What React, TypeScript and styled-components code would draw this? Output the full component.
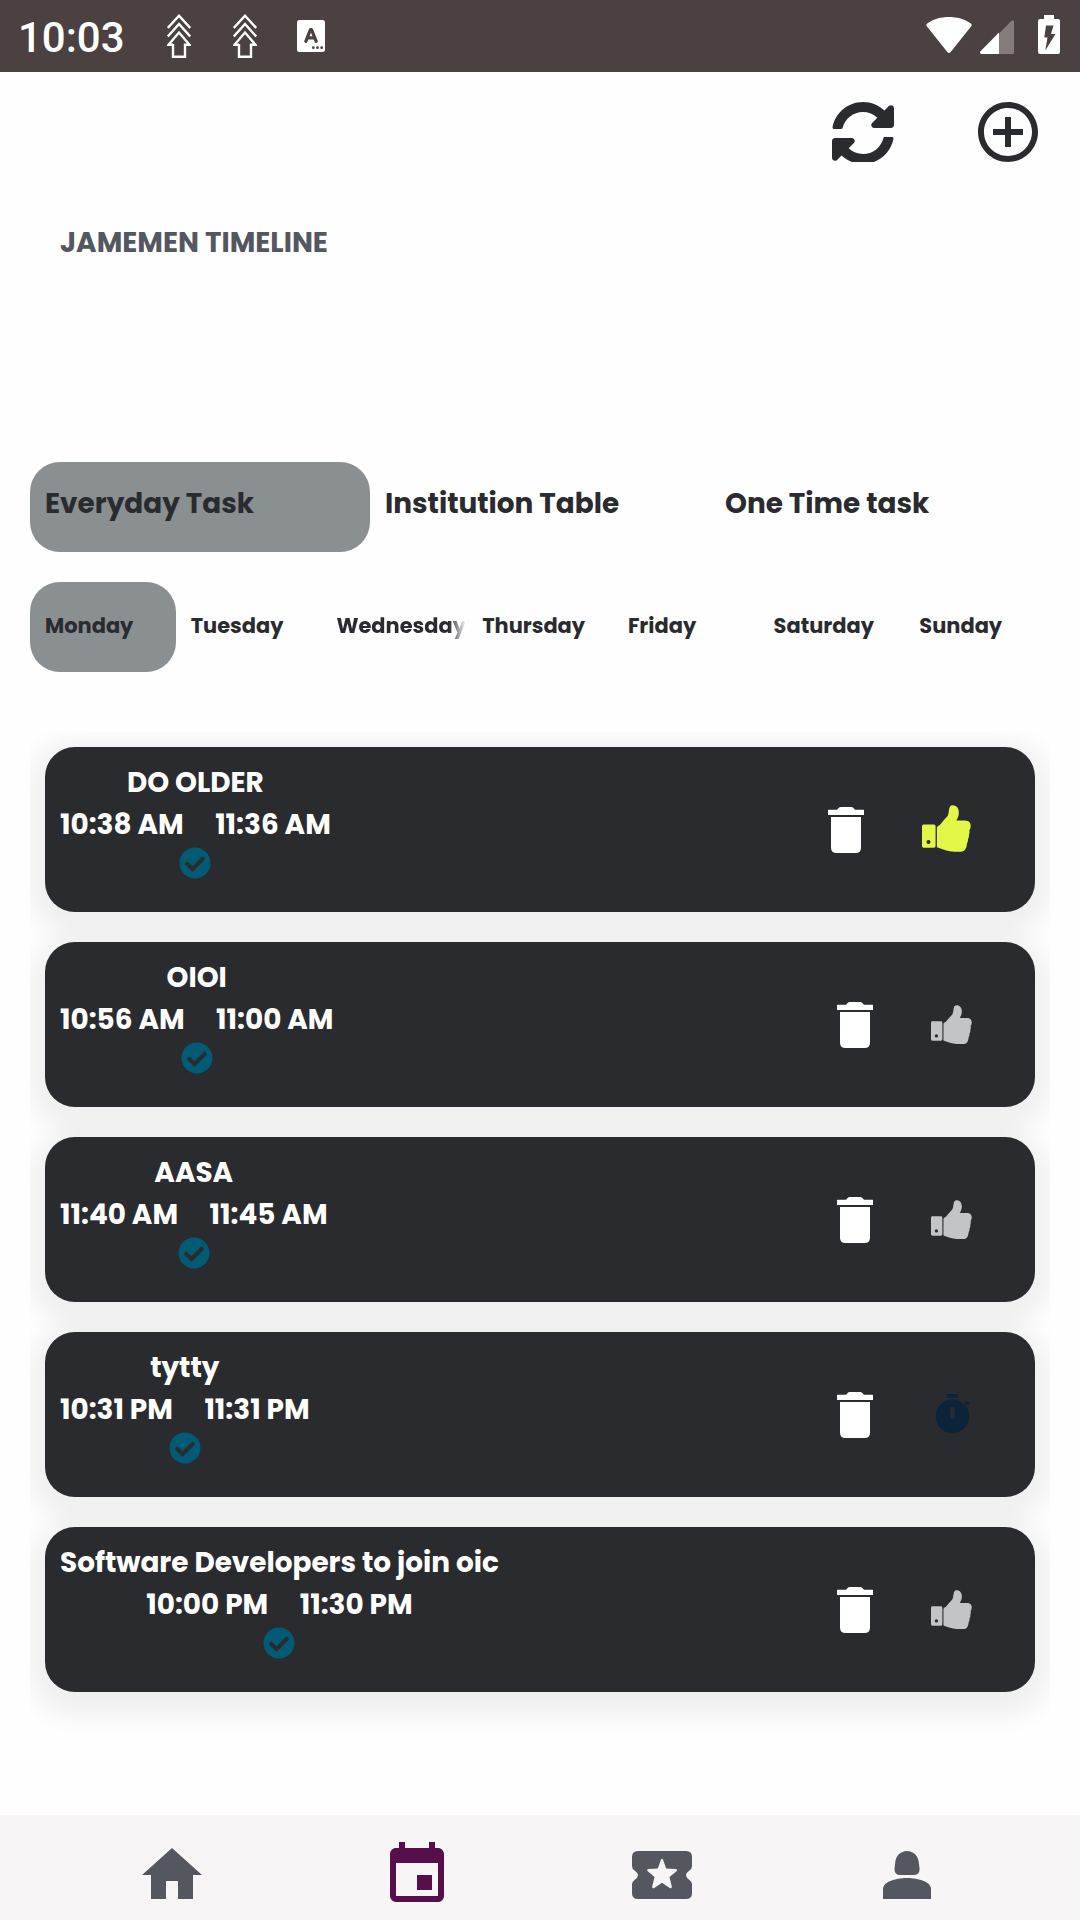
import React from "react";
import styled, { createGlobalStyle, css } from "styled-components";
import { FaCheckCircle, FaSyncAlt } from "react-icons/fa";

const ink = "#2a2b2f";
const slate = "#54575f";
const selected = "#8a8f92";

const GlobalStyle = createGlobalStyle`
  *, *::before, *::after { box-sizing: border-box; }
  body {
    margin: 0;
    background: #fefefe;
    font-family: Poppins, Inter, "Open Sans", sans-serif;
  }
  svg { display: block; flex: none; }
`;

const Screen = styled.main`
  width: 1080px;
  height: 1920px;
  display: flex;
  flex-direction: column;
  background: #fefefe;
  overflow: hidden;
`;

const StatusBar = styled.header`
  height: 72px;
  padding: 0 20px 0 18px;
  display: flex;
  justify-content: space-between;
  background: #4a4140;
  color: #fff;
`;

const StatusGroup = styled.div`
  display: flex;
  align-items: flex-start;
`;

const Clock = styled.span`
  width: 149px;
  padding-top: 13px;
  font: 500 42px/50px Roboto, sans-serif;
`;

const StatusIcon = styled.span<{ $top: number; $gap?: number }>`
  margin-top: ${(p) => p.$top}px;
  margin-right: ${(p) => p.$gap ?? 0}px;
`;

const Toolbar = styled.nav`
  height: 96px;
  padding: 24px 36px 0 0;
  display: flex;
  justify-content: flex-end;
  gap: 77px;
  color: ${ink};
`;

const ToolButton = styled.button<{ $top?: number; $height?: number }>`
  margin: ${(p) => p.$top ?? 0}px 0 0;
  height: ${(p) => p.$height ?? 72}px;
  padding: 0;
  border: 0;
  background: none;
  color: inherit;
  overflow: hidden;
  display: flex;
  align-items: flex-start;
`;

const Label = styled.span<{ $small?: boolean }>`
  display: inline-block;
  font-weight: 700;
  font-size: ${(p) => (p.$small ? 20.95 : 27.9)}px;
  line-height: ${(p) => (p.$small ? 34 : 42)}px;
  white-space: nowrap;
`;

const Heading = styled.h1`
  margin: 0;
  height: 294px;
  padding: 54px 0 0 60px;
  color: ${slate};
  font-size: inherit;
`;

const TabRow = styled.div`
  margin: 0 30px 30px;
  height: 90px;
  display: flex;
`;

const Tab = styled.div<{ $active?: boolean; $top: number }>`
  flex: 1 1 0;
  min-width: 0;
  padding: ${(p) => p.$top}px 0 0 15px;
  border-radius: 30px;
  color: ${ink};
  ${(p) => p.$active && css`background: ${selected};`}
`;

const FadedEdge = styled.div<{ $fade?: boolean }>`
  ${(p) =>
    p.$fade &&
    css`
      mask-image: linear-gradient(to right, #000 calc(100% - 18px), transparent calc(100% - 1px));
    `}
`;

const TaskList = styled.section`
  margin: 30px 30px 0;
  flex: 1;
  padding: 15px;
  display: flex;
  flex-direction: column;
  gap: 30px;
  overflow: hidden;
`;

const Card = styled.article`
  height: 165px;
  flex: none;
  padding: 15px 39px 0 15px;
  display: flex;
  justify-content: space-between;
  border-radius: 30px;
  background: ${ink};
  color: #fff;
  box-shadow: 0 9px 25px 15px rgba(0, 0, 0, 0.06);
`;

const Details = styled.div`
  display: flex;
  flex-direction: column;
  align-items: center;
`;

const Times = styled.div`
  display: flex;
  gap: 31.5px;
`;

const CheckMark = styled.span`
  margin-top: 1px;
  color: #025b74;
`;

const Actions = styled.div`
  height: 135px;
  display: flex;
  align-items: center;
  gap: 33px;
`;

const StatusSlot = styled.span<{ $state: State }>`
  width: ${(p) => (p.$state === "done" ? 99 : 90)}px;
  padding-left: ${(p) => (p.$state === "running" ? 2 : 0)}px;
  padding-bottom: ${(p) => (p.$state === "done" ? 2 : 0)}px;
  display: flex;
  justify-content: center;
`;

const BottomBar = styled.nav`
  height: 105px;
  flex: none;
  padding: 24px 51px 0 50px;
  display: flex;
  background: #f7f5f6;
`;

const NavItem = styled.a<{ $active?: boolean }>`
  flex: 1;
  display: flex;
  justify-content: center;
  color: ${(p) => (p.$active ? "#560f4b" : slate)};
`;

const ArrowStack = () => (
  <svg width="24" height="44" viewBox="0 0 24 44" fill="none" stroke="#fff" strokeWidth="2.4">
    <path d="M.8 14 12 1.800 23.200 14M.8 22.500 12 10 23.200 22.500" />
    <path d="M6 30.800H1.500L12 18.500 22.500 30.800H18V42.800H6V30Z" />
  </svg>
);

const KeyboardBadge = () => (
  <svg width="28" height="32" viewBox="0 0 28 32">
    <rect width="28" height="32" rx="2.500" fill="#fff" />
    <path d="M8.800 21.300 13.500 9.500h1L19.200 21.300M10.500 17.800h7" fill="none" stroke="#4a4140" strokeWidth="3.200" strokeLinejoin="round" strokeLinecap="round" />
    <g fill="#4a4140">
      <circle cx="16.300" cy="27.700" r="1.400" />
      <circle cx="20.500" cy="27.700" r="1.400" />
      <circle cx="24.700" cy="27.700" r="1.400" />
    </g>
  </svg>
);

const Wifi = () => (
  <svg width="46" height="36" viewBox="0 0 46 36" fill="#fff">
    <path d="M.8 9.200Q-.4 7.600 1.200 6.500C7.500 2 15 0 23 0S38.500 2 44.800 6.500Q46.400 7.600 45.200 9.200L24.500 35.200Q23 36.600 21.500 35.200Z" />
  </svg>
);

const Signal = () => (
  <svg width="35" height="34" viewBox="0 0 35 34">
    <path d="M19 13.500 31.500.8Q34 -.8 34 1.500V32.500Q34 34 32.500 34H19Z" fill="#847d7c" />
    <path d="M19 12.500V34H1.500Q-.8 33.500.5 31.200Z" fill="#fff" />
  </svg>
);

const Battery = () => (
  <svg width="22" height="39" viewBox="0 0 22 39">
    <path d="M6 0H16V4H20Q22 4 22 6V37Q22 39 20 39H2Q0 39 0 37V6Q0 4 2 4H6Z" fill="#fff" />
    <path d="M8 10.500H15.500L13 19H17.500L7.300 35.500L9.500 22.500H6.300Z" fill="#4a4140" />
  </svg>
);

const AddCircle = () => (
  <svg width="72" height="72" viewBox="0 0 24 24" fill="currentColor">
    <path d="M13 7h-2v4H7v2h4v4h2v-4h4v-2h-4V7zm-1-5C6.480 2 2 6.480 2 12s4.480 10 10 10 10-4.480 10-10S17.520 2 12 2zm0 18c-4.410 0-8-3.590-8-8s3.590-8 8-8 8 3.590 8 8-3.590 8-8 8z" />
  </svg>
);

const Trash = () => (
  <svg width="36" height="46" viewBox="0 0 36 46" fill="#fff">
    <path d="M.5 2.700H9C10.500 1.500 10.500 0 13 0H23C25.500 0 25.500 1.500 27 2.700H35.500Q36 2.700 36 3.200V8H0V3.200Q0 2.700.5 2.700Z" />
    <path d="M3 10H33V40.500Q33 46 27.500 46H8.500Q3 46 3 40.500Z" />
  </svg>
);

const Thumb = ({ color, width }: { color: string; width: number }) => (
  <svg width={width} height={(width * 142) / 148} viewBox="426 255 148 142" fill={color}>
    <path
      fillRule="evenodd"
      d="M431 314H462Q467 314 467 319V379Q467 384 462 384H431Q426 384 426 379V319Q426 314 431 314ZM445.500 360.500A6 6 0 1 0 445.500 372.500A6 6 0 1 0 445.500 360.500Z"
    />
    <path d="M471 324Q471 318 479 316C486 309 493 299 502 290Q506 286 507 272Q509 256 518 256C532 256 539 267 537 284Q536 293 530 302H555C569 302 574 311 573 320Q573 326 569 331Q571 336 568 345Q569 352 565 358Q566 365 562 371C560 388 555 396 540 396H524C504 396 489 389 471 383Z" />
  </svg>
);

const Stopwatch = () => (
  <svg width="45" height="45" viewBox="0 0 24 24" fill="#0b2439">
    <path fillRule="evenodd" d="M12 4a9 9 0 1 0 0 18 9 9 0 0 0 0-18zm1.100 10.200h-2.200V8h2.200z" />
    <path d="M9 1h6v2H9zM18.200 6 19.600 4.500 21 5.900 19.600 7.400Z" />
  </svg>
);

const HomeIcon = () => (
  <svg width="72" height="72" viewBox="0 0 24 24" fill="currentColor">
    <path d="M10 20v-6h4v6h5v-8h3L12 3 2 12h3v8z" />
  </svg>
);

const CalendarIcon = () => (
  <svg width="72" height="72" viewBox="0 0 24 24" fill="currentColor">
    <path d="M17 12h-5v5h5v-5zM16 1v2H8V1H6v2H5c-1.110 0-1.990.9-1.990 2L3 19a2 2 0 0 0 2 2h14c1.100 0 2-.9 2-2V5c0-1.100-.9-2-2-2h-1V1h-2zm3 18H5V8h14v11z" />
  </svg>
);

const TicketIcon = () => (
  <svg width="72" height="72" viewBox="0 0 72 72" fill="currentColor">
    <path
      fillRule="evenodd"
      d="M12 12H60Q66 12 66 18V27Q66 30 63.500 31.500Q60 34 60 36Q60 38.500 63.500 41Q66 43 66 45V54Q66 60 60 60H12Q6 60 6 54V45Q6 43 8.500 41Q12 38.500 12 36Q12 34 8.500 31.500Q6 30 6 27V18Q6 12 12 12ZM35 20.500 31.800 29.500 22.500 30Q20.200 30.500 21.800 32.200L28.500 38 26.200 47.500Q26 50 28.300 49L36 43.800 43.700 49Q46 50 45.800 47.500L43.500 38 50.500 32.200Q52 30.500 49.500 30L40.200 29.500 37 20.500Q36 19.200 35 20.500Z"
    />
  </svg>
);

const PersonIcon = () => (
  <svg width="72" height="72" viewBox="0 0 72 72" fill="currentColor">
    <path d="M36 12C42.500 12 47.300 17 47.800 23.500L48.600 30Q48.600 36 42.500 36H29.500Q23.500 36 23.500 30L24.200 23.500C24.700 17 29.500 12 36 12Z" />
    <path d="M12 60V50C12 43 24 39 36 39S60 43 60 50V60Z" />
  </svg>
);

type State = "done" | "idle" | "running";

const categories = ["Everyday Task", "Institution Table", "One Time task"];
const days = ["Monday", "Tuesday", "Wednesday", "Thursday", "Friday", "Saturday", "Sunday"];
const tasks: { title: string; from: string; to: string; state: State }[] = [
  { title: "DO OLDER", from: "10:38 AM", to: "11:36 AM", state: "done" },
  { title: "OIOI", from: "10:56 AM", to: "11:00 AM", state: "idle" },
  { title: "AASA", from: "11:40 AM", to: "11:45 AM", state: "idle" },
  { title: "tytty", from: "10:31 PM", to: "11:31 PM", state: "running" },
  { title: "Software Developers to join oic", from: "10:00 PM", to: "11:30 PM", state: "idle" },
];

const StateIcon = ({ state }: { state: State }) => {
  if (state === "running") return <Stopwatch />;
  return state === "done" ? <Thumb color="#e2f748" width={49} /> : <Thumb color="#c3c4c8" width={41} />;
};

export default function App() {
  return (
    <>
      <GlobalStyle />
      <Screen>
        <StatusBar>
          <StatusGroup>
            <Clock>10:03</Clock>
            <StatusIcon $top={14} $gap={42}><ArrowStack /></StatusIcon>
            <StatusIcon $top={14} $gap={40}><ArrowStack /></StatusIcon>
            <StatusIcon $top={20}><KeyboardBadge /></StatusIcon>
          </StatusGroup>
          <StatusGroup>
            <StatusIcon $top={17} $gap={8}><Wifi /></StatusIcon>
            <StatusIcon $top={20} $gap={23}><Signal /></StatusIcon>
            <StatusIcon $top={15}><Battery /></StatusIcon>
          </StatusGroup>
        </StatusBar>
        <Toolbar>
          <ToolButton $top={5} $height={61} aria-label="Refresh"><FaSyncAlt size={64} /></ToolButton>
          <ToolButton aria-label="Add task"><AddCircle /></ToolButton>
        </Toolbar>
        <Heading><Label>JAMEMEN TIMELINE</Label></Heading>
        <TabRow>
          {categories.map((name, i) => (
            <Tab key={name} $active={i === 0} $top={21}><Label>{name}</Label></Tab>
          ))}
        </TabRow>
        <TabRow>
          {days.map((name, i) => (
            <Tab key={name} $active={i === 0} $top={27}>
              <FadedEdge $fade={name === "Wednesday"}><Label $small>{name}</Label></FadedEdge>
            </Tab>
          ))}
        </TabRow>
        <TaskList>
          {tasks.map((t) => (
            <Card key={t.title}>
              <Details>
                <Label>{t.title}</Label>
                <Times>
                  <Label>{t.from}</Label>
                  <Label>{t.to}</Label>
                </Times>
                <CheckMark><FaCheckCircle size={32} /></CheckMark>
              </Details>
              <Actions>
                <Trash />
                <StatusSlot $state={t.state}><StateIcon state={t.state} /></StatusSlot>
              </Actions>
            </Card>
          ))}
        </TaskList>
        <BottomBar>
          <NavItem><HomeIcon /></NavItem>
          <NavItem $active><CalendarIcon /></NavItem>
          <NavItem><TicketIcon /></NavItem>
          <NavItem><PersonIcon /></NavItem>
        </BottomBar>
      </Screen>
    </>
  );
}
